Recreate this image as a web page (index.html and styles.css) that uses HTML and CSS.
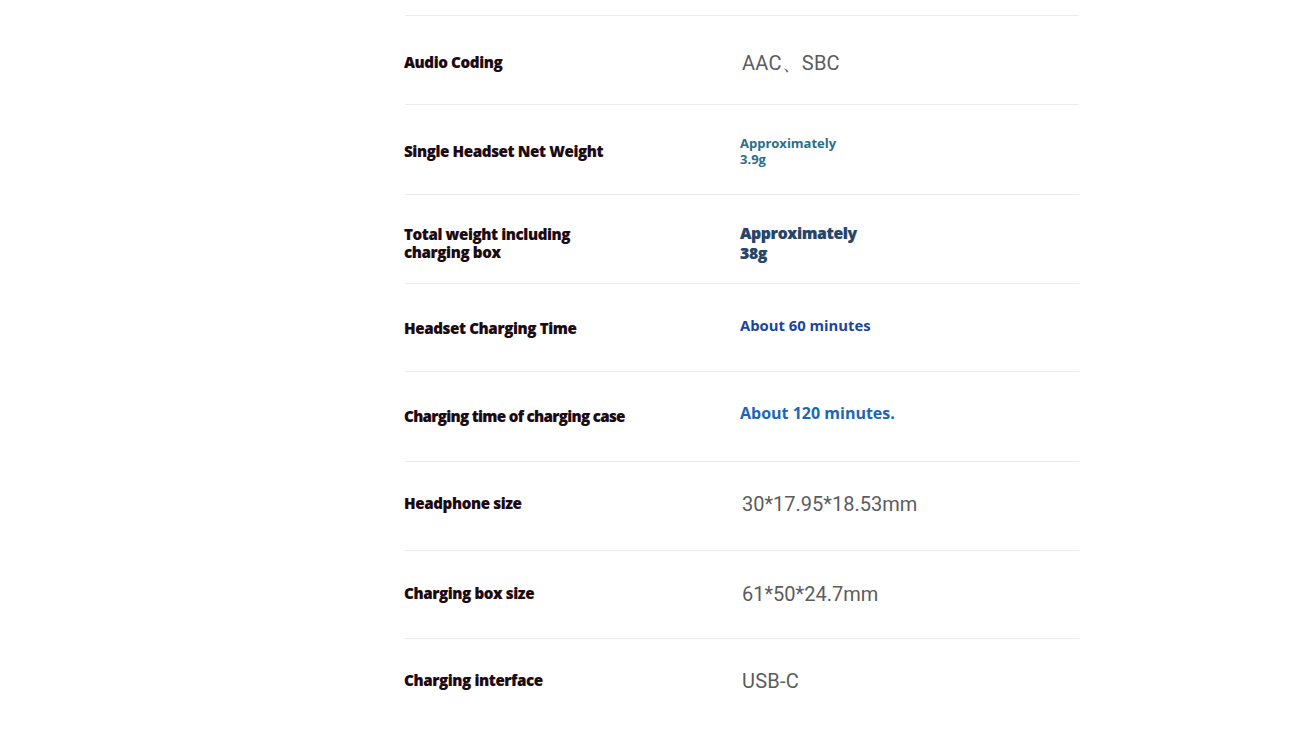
FILE: index.html
```html
<!DOCTYPE html>
<html lang="en">
<head>
<meta charset="utf-8">
<title>Specifications</title>
<link rel="stylesheet" href="styles.css">
</head>
<body>
<div class="specs">
  <div class="row r1">
    <div class="label">Audio Coding</div>
    <div class="value plain">AAC、SBC</div>
  </div>
  <div class="row r2">
    <div class="label">Single Headset Net Weight</div>
    <div class="value teal">Approximately<br>3.9g</div>
  </div>
  <div class="row r3">
    <div class="label">Total weight including<br>charging box</div>
    <div class="value navy">Approximately<br>38g</div>
  </div>
  <div class="row r4">
    <div class="label">Headset Charging Time</div>
    <div class="value blue">About 60 minutes</div>
  </div>
  <div class="row r5">
    <div class="label">Charging time of charging case</div>
    <div class="value sky">About 120 minutes.</div>
  </div>
  <div class="row r6">
    <div class="label">Headphone size</div>
    <div class="value plain">30*17.95*18.53mm</div>
  </div>
  <div class="row r7">
    <div class="label">Charging box size</div>
    <div class="value plain">61*50*24.7mm</div>
  </div>
  <div class="row r8">
    <div class="label">Charging interface</div>
    <div class="value plain">USB-C</div>
  </div>
</div>
</body>
</html>
```
FILE: styles.css
```css
html, body {
  margin: 0;
  padding: 0;
  background: #ffffff;
}
body {
  font-family: "Open Sans", sans-serif;
}
.specs {
  margin: 15px 0 0 405px;
  width: 674px;
}
.row {
  box-sizing: border-box;
  height: 89px;
  border-top: 1px solid #ececec;
  display: grid;
  grid-template-columns: 335px 1fr;
  align-items: center;
}
.r1 { padding-top: 4px; }
.r2 { height: 90px; padding-top: 2px; }
.r3 { padding-top: 8px; }
.r4 { height: 88px; }
.r5 { height: 90px; }
.r7 { height: 88px; }
.label {
  font-family: "Open Sans", sans-serif;
  font-weight: 800;
  font-size: 15px;
  line-height: 18px;
  color: #1a0a12;
  letter-spacing: -0.3px;
  text-shadow: 0.4px 0 0 rgba(120, 30, 60, 0.4);
  margin-left: -1px;
}
.r5 .label { letter-spacing: -0.6px; margin-top: -2px; }
.r6 .label { margin-top: -7px; }
.r7 .label { margin-top: -4px; }
.r8 .label { margin-top: -6px; }
.value {
  font-weight: 700;
}
.plain {
  font-family: "Roboto", sans-serif;
  font-weight: 400;
  font-size: 20px;
  color: #5c5c5c;
  margin-left: 2px;
  letter-spacing: 0.2px;
}
.r1 .plain { margin-top: 2px; }
.r6 .plain { margin-top: -4px; letter-spacing: 0; }
.r7 .plain { margin-top: -2px; letter-spacing: 0; }
.r8 .plain { margin-top: -4px; }
.teal {
  font-family: "Open Sans", sans-serif;
  font-size: 13px;
  line-height: 16px;
  color: #2a6f86;
}
.navy {
  font-family: "Open Sans", sans-serif;
  font-weight: 800;
  font-size: 15.5px;
  line-height: 20px;
  letter-spacing: -0.2px;
  color: #264468;
  text-shadow: 0.4px 0 0 rgba(38, 68, 104, 0.5);
}
.blue {
  font-family: "Open Sans", sans-serif;
  font-size: 14.8px;
  color: #1b44a0;
  margin-top: -6px;
}
.sky {
  font-family: "Open Sans", sans-serif;
  font-size: 16px;
  color: #1c67b3;
  margin-top: -8px;
}
```
